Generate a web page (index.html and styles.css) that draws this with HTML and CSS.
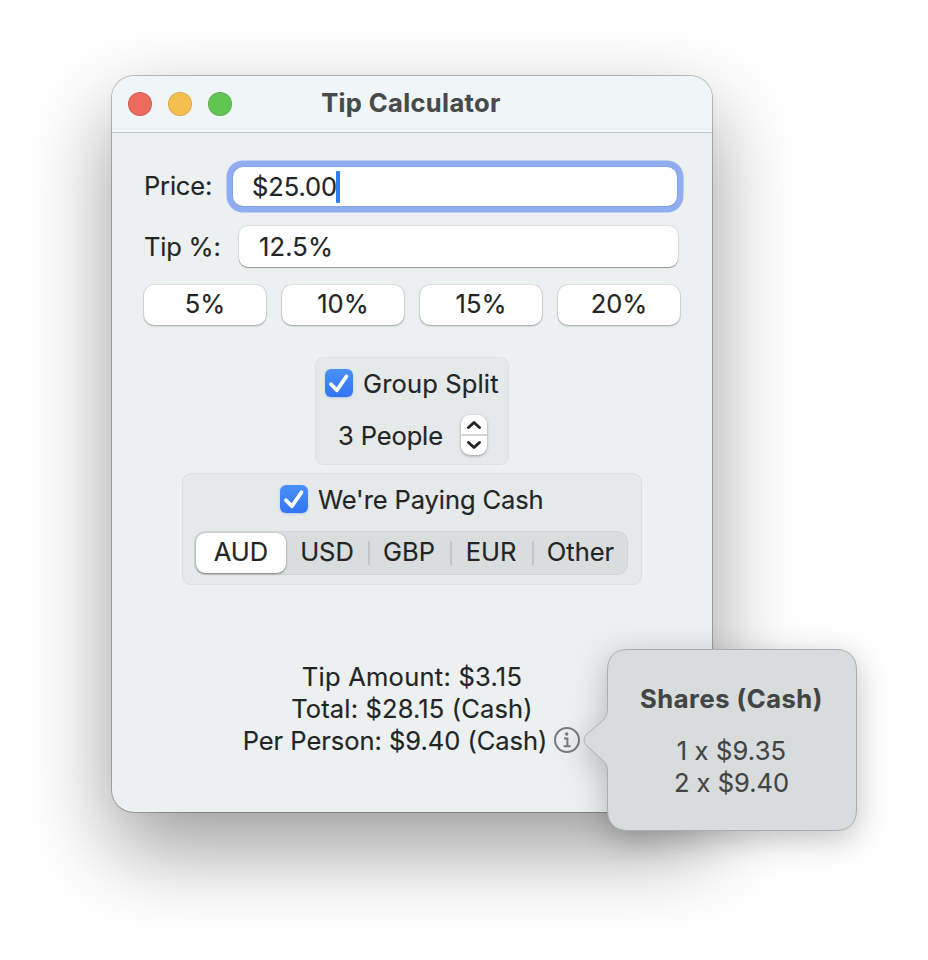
FILE: index.html
```html
<!DOCTYPE html>
<html lang="en">
<head>
<meta charset="utf-8">
<title>Tip Calculator</title>
<link rel="stylesheet" href="styles.css">
</head>
<body>
<main class="window">
  <header class="titlebar">
    <span class="lights"><i class="light red"></i><i class="light yellow"></i><i class="light green"></i></span>
    <h1 class="title"><span class="t-title">Tip Calculator</span></h1>
  </header>
  <section class="content">
    <div class="row price-row"><span class="label t-price">Price:</span><div class="field focused"><span class="t-value">$25.00</span><i class="caret"></i></div></div>
    <div class="row tip-row"><span class="label t-tip">Tip %:</span><div class="field"><span class="t-percent">12.5%</span></div></div>
    <div class="presets">
      <button class="preset">5%</button><button class="preset">10%</button><button class="preset">15%</button><button class="preset">20%</button>
    </div>
    <div class="group split">
      <div class="check-row">
        <svg class="check" viewBox="0 0 28 28"><path d="M6 15.2 11.9 21.3 21.5 7.3"/></svg>
        <span class="t-split">Group Split</span>
      </div>
      <div class="people"><span class="t-people">3 People</span>
        <svg class="stepper" viewBox="0 0 26 40"><path class="divider" d="M0 20H26"/><path d="M7.5 12.5 13 7.5 18.5 12.5M7.5 27.5 13 32.5 18.5 27.5"/></svg>
      </div>
    </div>
    <div class="group cash">
      <div class="check-row">
        <svg class="check" viewBox="0 0 28 28"><path d="M6 15.2 11.9 21.3 21.5 7.3"/></svg>
        <span class="t-cash">We're Paying Cash</span>
      </div>
      <div class="segments">
        <span class="segment active">AUD</span><span class="segment">USD</span><span class="segment ruled">GBP</span><span class="segment ruled">EUR</span><span class="segment ruled other">Other</span>
      </div>
    </div>
    <div class="results">
      <div class="result"><span class="t-amount">Tip Amount: $3.15</span></div>
      <div class="result"><span class="t-total">Total: $28.15 (Cash)</span></div>
      <div class="result"><span class="t-per">Per Person: $9.40 (Cash)</span>
        <svg class="info" viewBox="0 0 28 28"><circle cx="14" cy="14" r="12"/><circle class="dot" cx="13.7" cy="8" r="1.7"/><path d="M11 12.5H14.4V20M10.7 20.2H17.6"/></svg>
      </div>
    </div>
  </section>
</main>
<aside class="popover">
  <svg class="bubble" viewBox="0 0 274 182"><path d="M45 .5H253C266 .5 273.5 8 273.5 21V161C273.5 174 266 181.5 253 181.5H45C32 181.5 24.5 174 24.5 161V122C24.5 115 21 112 16 108L3 96Q-1 91 3 86L16 75C21 71 24.5 67 24.5 60V21C24.5 8 32 .5 45 .5Z"/></svg>
  <div class="shares">
    <strong class="t-shares">Shares (Cash)</strong>
    <span class="share t-one">1 x $9.35</span>
    <span class="share t-two">2 x $9.40</span>
  </div>
</aside>
</body>
</html>
```
FILE: styles.css
```css
* { box-sizing: border-box; }
body { margin: 0; height: 960px; overflow: hidden; background: #fff; font: 25.5px/32px Inter, "Liberation Sans", sans-serif; -webkit-text-stroke: .15px currentColor; color: #232525; }
span, strong { white-space: nowrap; }
.window { width: 600px; height: 736px; margin: 76px 0 0 112px; display: flow-root; border-radius: 22px; background: #ecf0f1; box-shadow: 0 0 0 1px rgba(0,0,0,.2), 0 0 2px rgba(0,0,0,.15), 0 36px 86px rgba(0,0,0,.4); }
.titlebar { height: 57px; display: grid; grid-template-columns: 1fr auto 1fr; align-items: center; border-bottom: 1px solid #c3c8c9; border-radius: 22px 22px 0 0; background: #f0f6f7; }
.lights { display: flex; gap: 16px; padding-left: 16px; }
.light { width: 24px; height: 24px; border-radius: 50%; border: 1px solid rgba(0,0,0,.12); }
.red { background: #ed6a5e; } .yellow { background: #f5bf4f; } .green { background: #61c554; }
.title { margin: 0 0 3px -2px; font-size: 25.5px; font-weight: 700; color: #474a4a; }
.content { padding-top: 27px; }
.row { display: flex; align-items: center; padding-left: 32px; }
.price-row { height: 52px; }
.tip-row { height: 41px; margin-top: 14px; }
.label { width: 89px; }
.tip-row .label { width: 95px; }
.field { display: flex; align-items: center; width: 439px; height: 41px; padding: 1px 0 0 20px; border-radius: 9px; background: #fff; box-shadow: 0 0 0 1px rgba(0,0,0,.06), 0 1px 1px rgba(0,0,0,.35); }
.focused { width: 444px; height: 39px; padding-left: 19px; border-radius: 10px; box-shadow: 0 0 0 1px #84a4e6, 0 0 0 6.5px #8fadf0; }
.caret { width: 4px; height: 32px; margin-left: -1px; border-radius: 1px; background: #347bf7; }
.presets { display: grid; grid-template-columns: repeat(4, 122px); gap: 16px; margin: 18px 0 0 32px; }
.preset { height: 40px; padding: 0 0 2px; border: 0; border-radius: 10px; background: #fff; color: inherit; font: inherit; box-shadow: 0 0 0 1px rgba(0,0,0,.06), 0 1px 2px rgba(0,0,0,.28); }
.group { margin: 0 auto; border: 1px solid #dce0e1; border-radius: 9px; background: #e5e9ea; }
.split { width: 194px; height: 108px; margin-top: 32px; padding: 11px 0 0 9px; }
.check-row { display: flex; align-items: center; gap: 10px; height: 30px; }
.check { width: 28px; height: 28px; margin-top: -2px; border-radius: 6px; background: linear-gradient(#4a91f7, #3274f6); box-shadow: 0 1px 2px rgba(50,116,246,.3); fill: none; stroke: #fff; stroke-width: 3.8; stroke-linecap: round; stroke-linejoin: round; }
.people { display: flex; align-items: center; gap: 18px; height: 42px; margin: 15px 0 0 13px; }
.people span { padding-top: 2px; }
.stepper { width: 26px; height: 40px; border-radius: 9px; background: #fff; box-shadow: 0 1px 3px rgba(0,0,0,.35); fill: none; stroke: #242626; stroke-width: 3; stroke-linecap: round; stroke-linejoin: round; }
.stepper .divider { stroke: #d6d6d6; stroke-width: 2; }
.cash { width: 460px; height: 112px; margin-top: 8px; padding: 11px 0 0 11px; }
.cash .check-row { padding-left: 86px; }
.segments { display: grid; grid-template-columns: 91px 82px 82px 82px 97px; width: 434px; height: 44px; margin-top: 16px; border: 1px solid #d0d4d5; border-radius: 11px; background: #d9dddd; }
.segment { display: flex; align-items: center; justify-content: center; padding-bottom: 2px; }
.active { height: 40px; margin: 1px 0 0 1px; border-radius: 9px; background: #fff; box-shadow: 0 1px 2px rgba(0,0,0,.4), 0 0 1px rgba(0,0,0,.3); }
.ruled { background: linear-gradient(#c1c5c6, #c1c5c6) 0 9px / 2px 24px no-repeat; }
.results { margin-top: 76px; }
.result { display: flex; align-items: center; justify-content: center; height: 32px; }
.info { width: 28px; height: 28px; margin: -2px 0 0 6px; fill: none; stroke: #777a7b; stroke-width: 2; }
.info .dot { fill: #777a7b; stroke: none; }
.popover { position: absolute; left: 583px; top: 649px; width: 274px; height: 182px; color: #424544; }
.bubble { position: absolute; inset: 0; width: 274px; height: 182px; overflow: visible; fill: #d8dcdd; stroke: #a9adae; stroke-width: 1; filter: drop-shadow(0 8px 16px rgba(0,0,0,.25)); }
.shares { position: relative; display: flex; flex-direction: column; align-items: center; padding: 34px 0 0 23px; }
.shares strong { margin-bottom: 20px; }
.t-title { letter-spacing: .38px; }
.t-shares { letter-spacing: .55px; }
.t-price, .t-tip { letter-spacing: -.2px; }
.t-value { letter-spacing: -.1px; }
.t-percent, .t-split { letter-spacing: .15px; }
.t-people { letter-spacing: -.12px; }
.t-cash { letter-spacing: -.1px; }
.t-amount { letter-spacing: .25px; }
.t-total { letter-spacing: .15px; }
.t-per { letter-spacing: -.03px; }
.t-one { letter-spacing: .15px; }
```
